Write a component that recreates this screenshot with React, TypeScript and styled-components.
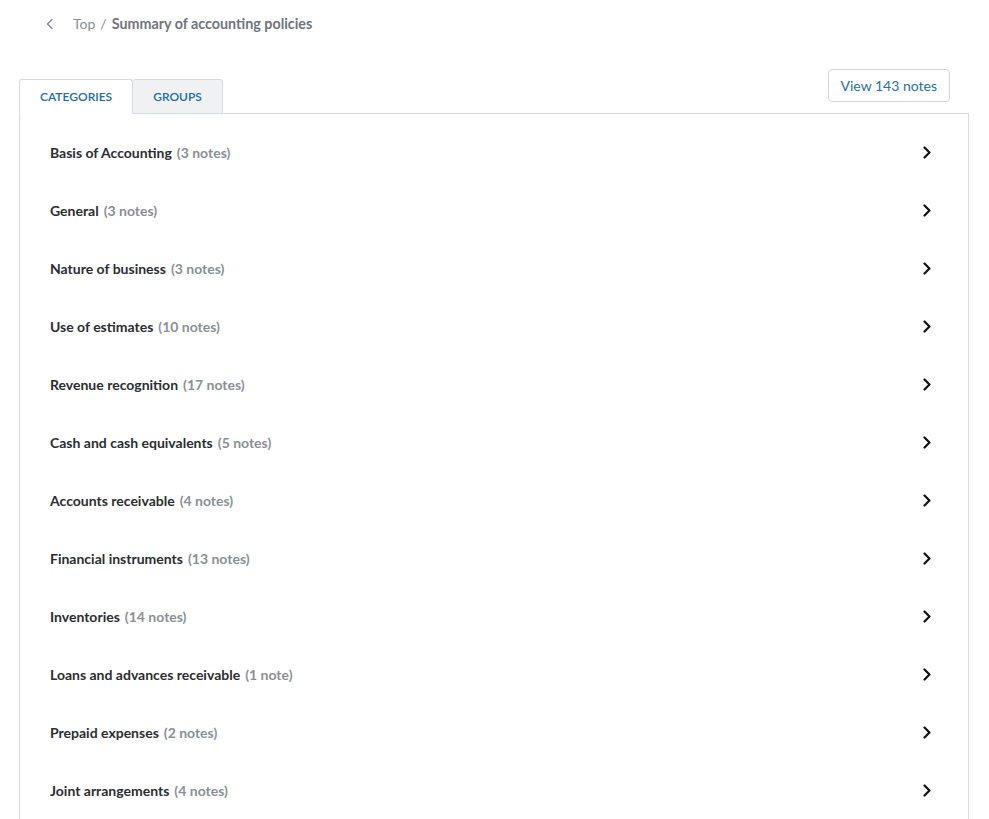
import styled, { createGlobalStyle } from 'styled-components';

const categories: { name: string; count: number }[] = [
  { name: 'Basis of Accounting', count: 3 },
  { name: 'General', count: 3 },
  { name: 'Nature of business', count: 3 },
  { name: 'Use of estimates', count: 10 },
  { name: 'Revenue recognition', count: 17 },
  { name: 'Cash and cash equivalents', count: 5 },
  { name: 'Accounts receivable', count: 4 },
  { name: 'Financial instruments', count: 13 },
  { name: 'Inventories', count: 14 },
  { name: 'Loans and advances receivable', count: 1 },
  { name: 'Prepaid expenses', count: 2 },
  { name: 'Joint arrangements', count: 4 },
];

export default function App() {
  return (
    <>
      <GlobalStyle />
      <Page>
        <Breadcrumb>
          <BackButton>
            <svg width="10" height="12" viewBox="0 0 10 12" fill="none">
              <path d="M7 1.5L2.5 6L7 10.5" stroke="#8a8f96" strokeWidth="1.6" strokeLinecap="round" strokeLinejoin="round" />
            </svg>
          </BackButton>
          <Crumb>Top</Crumb>
          <Separator>/</Separator>
          <Current>Summary of accounting policies</Current>
        </Breadcrumb>

        <TabBar>
          <Tabs>
            <Tab $active>Categories</Tab>
            <Tab>Groups</Tab>
          </Tabs>
          <ViewButton>View 143 notes</ViewButton>
        </TabBar>

        <Panel>
          {categories.map((c) => (
            <Row key={c.name} role="button">
              <RowLabel>
                {c.name}
                <Count>({c.count} {c.count === 1 ? 'note' : 'notes'})</Count>
              </RowLabel>
              <svg width="10" height="14" viewBox="0 0 10 14" fill="none">
                <path d="M2.5 2.5L7.5 7.5L2.5 12.5" stroke="#111" strokeWidth="2.2" strokeLinecap="round" strokeLinejoin="round" />
              </svg>
            </Row>
          ))}
        </Panel>
      </Page>
    </>
  );
}

const GlobalStyle = createGlobalStyle`
  html, body {
    margin: 0;
    padding: 0;
    background: #ffffff;
    font-family: Lato, "Open Sans", Arial, sans-serif;
  }
  * {
    box-sizing: border-box;
  }
`;

const Page = styled.div`
  padding: 0 20px 0 19px;
`;

const Breadcrumb = styled.div`
  height: 47px;
  display: flex;
  align-items: center;
  padding-left: 26px;
  font-size: 14px;
`;

const BackButton = styled.div`
  width: 10px;
  height: 12px;
  display: flex;
  align-items: center;
  margin-right: 18px;
`;

const Crumb = styled.span`
  color: #8a8f96;
`;

const Separator = styled.span`
  color: #8a8f96;
  margin: 0 5px 0 5px;
`;

const Current = styled.span`
  color: #6f757d;
  font-weight: 700;
  font-size: 14.3px;
`;

const TabBar = styled.div`
  margin-top: 22px;
  display: flex;
  justify-content: space-between;
  align-items: flex-end;
`;

const Tabs = styled.div`
  display: flex;
  margin-bottom: -1px;
`;

const Tab = styled.div<{ $active?: boolean }>`
  height: 35px;
  padding: 0 20px;
  display: flex;
  align-items: center;
  font-size: 12px;
  font-weight: 600;
  text-transform: uppercase;
  color: #1d6aa5;
  background: ${({ $active }) => ($active ? '#ffffff' : '#f0f1f3')};
  border: 1px solid #d6d9dd;
  border-bottom-color: ${({ $active }) => ($active ? '#ffffff' : '#d6d9dd')};
  border-radius: 3px 3px 0 0;
  & + & {
    border-left: none;
  }
`;

const ViewButton = styled.button`
  height: 33px;
  padding: 0 12px;
  margin-bottom: 11px;
  margin-right: 19px;
  border: 1px solid #d3d7dc;
  border-radius: 4px;
  background: #ffffff;
  color: #2b6ea6;
  font-family: inherit;
  font-size: 14px;
  cursor: pointer;
`;

const Panel = styled.div`
  border: 1px solid #d6d9dd;
  border-bottom: none;
  padding: 9px 36px 0 30px;
`;

const Row = styled.div`
  height: 58px;
  display: flex;
  align-items: center;
  justify-content: space-between;
  cursor: pointer;
`;

const RowLabel = styled.div`
  font-size: 14px;
  font-weight: 700;
  color: #2a2d31;
`;

const Count = styled.span`
  margin-left: 5px;
  color: #8a8f96;
`;
